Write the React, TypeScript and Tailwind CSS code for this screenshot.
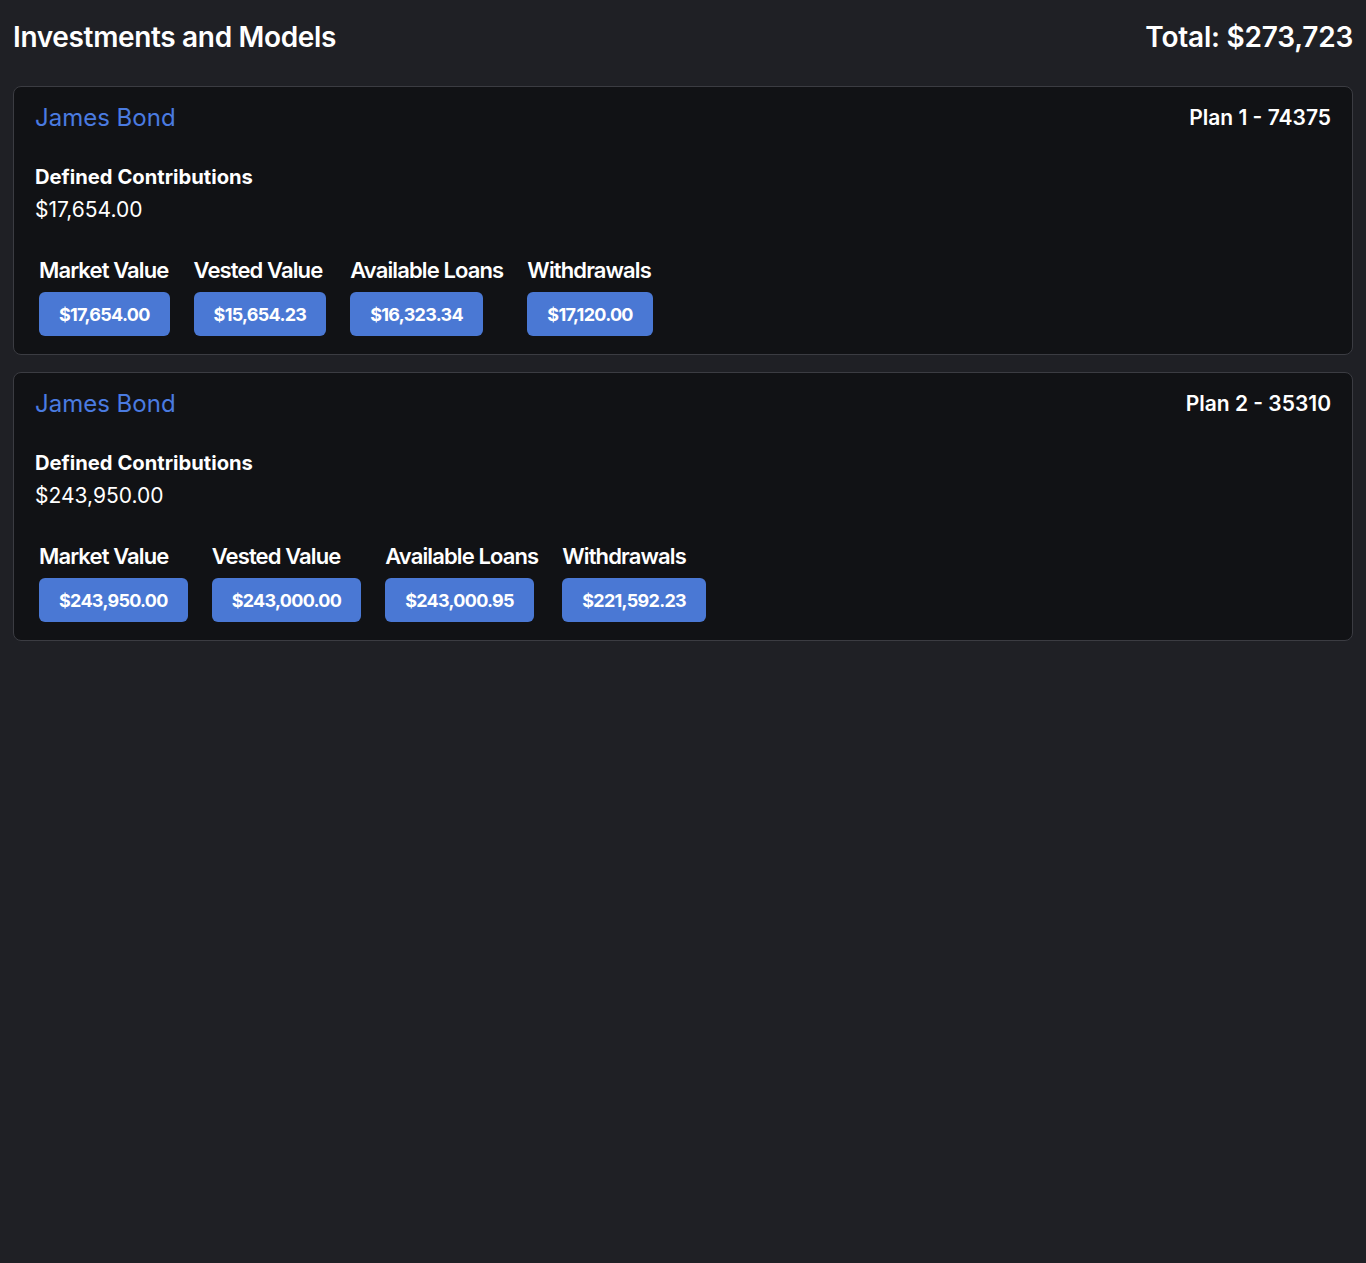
import React from "react";

type Plan = {
  name: string;
  plan: string;
  dc: string;
  items: { label: string; value: string }[];
};

const plans: Plan[] = [
  {
    name: "James Bond",
    plan: "Plan 1 - 74375",
    dc: "$17,654.00",
    items: [
      { label: "Market Value", value: "$17,654.00" },
      { label: "Vested Value", value: "$15,654.23" },
      { label: "Available Loans", value: "$16,323.34" },
      { label: "Withdrawals", value: "$17,120.00" },
    ],
  },
  {
    name: "James Bond",
    plan: "Plan 2 - 35310",
    dc: "$243,950.00",
    items: [
      { label: "Market Value", value: "$243,950.00" },
      { label: "Vested Value", value: "$243,000.00" },
      { label: "Available Loans", value: "$243,000.95" },
      { label: "Withdrawals", value: "$221,592.23" },
    ],
  },
];

function Card({ p }: { p: Plan }) {
  return (
    <div className="rounded-lg border border-[#3b3c42] bg-[#111215] px-[21px] pt-[15px] pb-[18px]">
      <div className="flex items-center justify-between">
        <div className="text-[24px] leading-[32px] text-[#4a7be0]">{p.name}</div>
        <div className="text-[21px] leading-[32px] font-semibold text-white">{p.plan}</div>
      </div>
      <div className="mt-[28px] text-[20.2px] leading-[30px] font-bold text-white">
        Defined Contributions
      </div>
      <div className="mt-[3px] text-[21px] leading-[30px] text-white">{p.dc}</div>
      <div className="mt-[31px] flex gap-6 pl-1">
        {p.items.map((it) => (
          <div key={it.label} className="flex flex-col items-start">
            <div className="text-[22px] leading-[28px] font-semibold tracking-[-0.04em] text-white whitespace-nowrap">
              {it.label}
            </div>
            <div className="mt-[8px] h-[44px] flex items-center rounded-md bg-[#4a78d4] px-5 text-[18px] font-bold tracking-[-0.04em] text-white">
              {it.value}
            </div>
          </div>
        ))}
      </div>
    </div>
  );
}

export default function App() {
  return (
    <div
      className="min-h-[1263px] bg-[#1f2025] px-[13px] text-white"
      style={{ fontFamily: "Inter, 'Noto Sans', sans-serif" }}
    >
      <div className="flex items-center justify-between pt-[16px]">
        <h1 className="text-[28px] leading-[42px] font-semibold tracking-[-0.012em]">Investments and Models</h1>
        <div className="text-[28px] leading-[42px] font-semibold tracking-[-0.008em]">Total: $273,723</div>
      </div>
      <div className="mt-[28px] flex flex-col gap-[17px]">
        {plans.map((p) => (
          <Card key={p.plan} p={p} />
        ))}
      </div>
    </div>
  );
}
